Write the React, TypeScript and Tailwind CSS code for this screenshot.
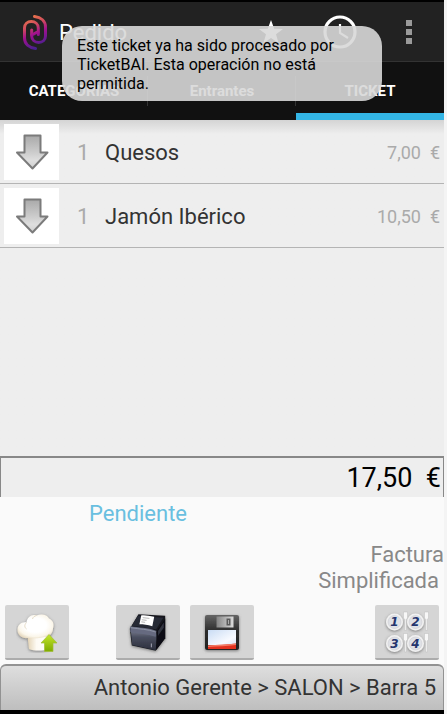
import type { ReactNode } from "react";

const lines = [
  { id: 1, units: 1, name: "Quesos", price: "7,00" },
  { id: 2, units: 1, name: "Jamón Ibérico", price: "10,50" },
];

const tabs = [
  { label: "CATEGORIAS", active: false },
  { label: "Entrantes", active: false },
  { label: "TICKET", active: true },
];

const Logo = () => (
  <svg viewBox="0 0 24 36" className="h-9 w-6" fill="none" aria-hidden="true">
    <defs>
      <linearGradient id="logo" x1="4" y1="3" x2="18" y2="34" gradientUnits="userSpaceOnUse">
        <stop offset="0" stopColor="#ec7a48" />
        <stop offset="0.3" stopColor="#cf4a5e" />
        <stop offset="0.55" stopColor="#a0108e" />
        <stop offset="1" stopColor="#3c2391" />
      </linearGradient>
    </defs>
    <g stroke="url(#logo)" strokeWidth="3" strokeLinecap="round" strokeLinejoin="round">
      <path d="M11.500 2.500c6.500.8 11 4.500 11 10.500v9c0 4-3 6.500-6.800 6.500s-7-2.500-7-6.500v-6" />
      <path d="M12.500 34.500C6 33.700 1.500 30 1.500 24v-10C1.500 10 4.500 7.500 8.300 7.500s7 2.500 7 6.500v6.500" />
      <path d="M8.700 20.500c4 0 3-2.500 6.600-2.500" />
    </g>
  </svg>
);

const StarIcon = () => (
  <svg viewBox="0 0 24 24" className="h-6 w-6" aria-hidden="true">
    <path fill="#fff" d="M12 0l3.200 8.700 8.800.2-7 5.400 2.500 8.700L12 18l-7.500 5 2.500-8.700-7-5.400 8.800-.2z" />
  </svg>
);

const ClockIcon = () => (
  <svg viewBox="0 0 34 34" className="h-[34px] w-[34px]" fill="none" stroke="#fff" aria-hidden="true">
    <circle cx="17" cy="17" r="15" strokeWidth="3.200" />
    <path d="M17 9v9l8 5" strokeWidth="2.200" />
  </svg>
);

const MoreIcon = () => (
  <svg viewBox="0 0 8 26" className="h-[26px] w-2" fill="#9a9a9a" aria-hidden="true">
    <path d="M1 1h6v6H1zM1 10h6v6H1zM1 19h6v6H1z" />
  </svg>
);

const ArrowDown = () => (
  <svg viewBox="0 0 34 36" className="h-9 w-[34px]" aria-hidden="true">
    <defs>
      <linearGradient id="arrow" x1="0" y1="0" x2="0" y2="1">
        <stop offset="0" stopColor="#a9a9a9" />
        <stop offset="0.500" stopColor="#cbcbcb" />
        <stop offset="0.750" stopColor="#dedede" />
        <stop offset="1" stopColor="#d0d0d0" />
      </linearGradient>
    </defs>
    <path
      d="M9.500 1.500h16v17h7L17.500 34.500 2 18.500h7.500z"
      fill="url(#arrow)"
      stroke="#7b7b7b"
      strokeWidth="2"
      strokeLinejoin="round"
    />
  </svg>
);

const ChefIcon = () => (
  <svg viewBox="0 0 42 42" className="h-[42px] w-[42px]" aria-hidden="true">
    <defs>
      <radialGradient id="hat" cx="0.500" cy="0.450" r="0.600">
        <stop offset="0.500" stopColor="#ffffff" />
        <stop offset="0.800" stopColor="#fbf6ea" />
        <stop offset="1" stopColor="#e6d9bf" />
      </radialGradient>
      <linearGradient id="brim" x1="0" y1="0" x2="1" y2="0">
        <stop offset="0" stopColor="#e3d3b4" />
        <stop offset="0.400" stopColor="#fdfaf3" />
        <stop offset="1" stopColor="#fff" />
      </linearGradient>
      <linearGradient id="up" x1="0" y1="0" x2="0" y2="1">
        <stop offset="0" stopColor="#c4e62c" />
        <stop offset="1" stopColor="#7fab00" />
      </linearGradient>
      <filter id="soft" x="-20%" y="-20%" width="140%" height="140%">
        <feDropShadow dx="0" dy="1" stdDeviation="1.500" floodColor="#555" floodOpacity="0.700" />
      </filter>
    </defs>
    <g filter="url(#soft)">
      <path d="M11.500 25l1.500 13c5 2 14 2 19 0l2-14z" fill="url(#brim)" />
      <path
        d="M12 27C6 28 1.500 24 1.500 19s4-8.500 9-7.500C11.500 6 15.500 3 20.500 4.500 26 2.500 31 3.500 33 7.500c4 1.500 5.500 6 4 10 0 5-3.500 8-8 8.500-6 1.500-11 1.500-17 1z"
        fill="url(#hat)"
      />
      <path d="M10.500 11.500c-2.500 2.500-2 5 0 6.500M20.500 4.500c-2 .5-3.500 1.500-4 3.500" fill="none" stroke="#e6dbc5" />
    </g>
    <path d="M33 23.500l8 8.500h-4v8.500h-8.500V32H25z" fill="url(#up)" stroke="#a1bd36" strokeWidth="0.700" />
  </svg>
);

const PrinterIcon = () => (
  <svg viewBox="0 0 46 46" className="h-11 w-11" aria-hidden="true">
    <defs>
      <linearGradient id="front" x1="0" y1="0" x2="0" y2="1">
        <stop offset="0" stopColor="#777b8c" />
        <stop offset="0.350" stopColor="#4a4e5f" />
        <stop offset="1" stopColor="#2b2e3c" />
      </linearGradient>
    </defs>
    <g filter="url(#soft)">
      <path d="M13 4.500l28 1.500v23.500L31 42.500 6 37 4 19.500z" fill="#16181f" />
      <path d="M12.500 6L39 8l-7.500 12L6 16.500z" fill="#272a35" />
      <path d="M5 21l27 3.500.5 5L31 42 6.500 36.500z" fill="url(#front)" />
      <path d="M4.500 17c9 1.500 18 1 27.500 5l-1 6c-9-3-18-3-26.500-5z" fill="#666b80" />
      <path d="M5 18.500c9 1.500 18 1.500 26 4.500" fill="none" stroke="#8f94a6" />
      <path d="M32 22l9-13v20.500L31.500 42z" fill="#0d0e13" />
      <path d="M33.500 22L39.500 13v5.500l-6 8.500z" fill="#303440" />
    </g>
    <path d="M16 5.500c5-.5 8 .5 13.500 1.500L27.500 17c-5-1.500-9-2-13.500-2z" fill="#fff" />
    <path d="M17.500 8l7 .8M16.500 10.200l5 .6M16 12.400l4 .5" stroke="#b5b5b5" />
    <path d="M26.500 35v4" stroke="#aab" />
  </svg>
);

const FloppyIcon = () => (
  <svg viewBox="0 0 46 46" className="h-[46px] w-[46px]" aria-hidden="true">
    <defs>
      <linearGradient id="case" x1="0" y1="0" x2="0" y2="1">
        <stop offset="0" stopColor="#666" />
        <stop offset="0.450" stopColor="#2c2c2c" />
        <stop offset="1" stopColor="#222" />
      </linearGradient>
      <linearGradient id="label" x1="0" y1="0" x2="1" y2="1">
        <stop offset="0" stopColor="#c9dcf4" />
        <stop offset="0.700" stopColor="#f8faff" />
        <stop offset="1" stopColor="#d9e6f8" />
      </linearGradient>
      <linearGradient id="metal" x1="0" y1="0" x2="1" y2="0">
        <stop offset="0" stopColor="#858585" />
        <stop offset="1" stopColor="#dcdcdc" />
      </linearGradient>
    </defs>
    <rect x="6" y="6" width="34" height="35" rx="2" fill="url(#case)" filter="url(#soft)" />
    <path d="M17.500 7.500h17v11h-17z" fill="url(#metal)" />
    <path d="M27.500 9.500h4v7h-4z" fill="#5a5a5a" />
    <path d="M29 11h1v4h-1z" fill="#aaa" />
    <path d="M9 21h28v15H9z" fill="url(#label)" />
    <path d="M9 36.500c10-.5 18-1 28-2V40H9z" fill="#e3311f" />
    <path d="M9 36.500c10-.5 18-1 28-2v1.500c-10 1-18 1.500-28 2z" fill="#f37c66" />
  </svg>
);

const plates = [
  { n: 1, x: 10.500, y: 13 },
  { n: 2, x: 31.500, y: 13 },
  { n: 3, x: 10.500, y: 34.500 },
  { n: 4, x: 31.500, y: 34.500 },
];

const TablesIcon = () => (
  <svg viewBox="0 0 46 46" className="h-[46px] w-[46px]" aria-hidden="true">
    {plates.map((p) => (
      <g key={p.n}>
        <circle cx={p.x} cy={p.y} r="8.500" fill="#f1f1f1" filter="url(#soft)" />
        <circle cx={p.x} cy={p.y} r="6.500" fill="#dfe1e6" stroke="#c8c8ce" strokeWidth="0.500" />
        <text
          x={p.x}
          y={p.y + 4}
          textAnchor="middle"
          className="font-['DejaVu_Sans',sans-serif] text-[12px] font-bold italic"
          fill="#24356f"
        >
          {p.n}
        </text>
      </g>
    ))}
    {plates.map((p) => (
      <path
        key={p.n}
        d={`M${p.x + 9} ${p.y - 10}v6l1.200 1.500v11h1.600v-11l1.200-1.500v-6z`}
        fill="#f7f7f7"
        stroke="#b4b4b4"
        strokeWidth="0.400"
      />
    ))}
  </svg>
);

const ToolButton = ({ label, children }: { label: string; children: ReactNode }) => (
  <button
    type="button"
    aria-label={label}
    className="flex h-[55px] w-16 items-center justify-center rounded-xs border-b-2 border-[#acacac] bg-[#d5d5d5]"
  >
    {children}
  </button>
);

const Toast = () => (
  <div
    role="status"
    className="absolute inset-x-[62px] top-[26px] rounded-[20px] bg-[#d8d8d8]/90 px-[15px] pt-[10px] pb-2 text-base leading-[19px] text-black"
  >
    Este ticket ya ha sido procesado por TicketBAI. Esta operación no está permitida.
  </div>
);

const Header = () => (
  <header className="border-t-2 border-black bg-[#222]">
    <div className="flex h-[60px] items-center border-b border-[#333] pr-[31px] pl-[23px]">
      <Logo />
      <h1 className="ml-3 flex-1 pt-0.5 text-[22px] text-white">Pedido</h1>
      <button type="button" aria-label="Favoritos" className="mr-10">
        <StarIcon />
      </button>
      <button type="button" aria-label="Historial" className="mr-12">
        <ClockIcon />
      </button>
      <button type="button" aria-label="Más opciones">
        <MoreIcon />
      </button>
    </div>
    <nav className="grid h-[58px] grid-cols-3 bg-[#111]">
      {tabs.map((tab) => (
        <button
          key={tab.label}
          type="button"
          className={
            tab.active
              ? "border-b-[7px] border-[#33b5e5] pt-[7px] text-[15px] font-bold text-white"
              : "relative text-[15px] font-bold text-white after:absolute after:top-[14px] after:right-0 after:h-[30px] after:w-px after:bg-[#333]"
          }
        >
          {tab.label}
        </button>
      ))}
    </nav>
  </header>
);

const App = () => {
  return (
    <div className="min-h-screen bg-[#f4f4f4] pr-[3px] font-[Roboto,sans-serif]">
      <div className="relative flex min-h-screen flex-col border-b-4 border-black bg-[#eee]">
        <Header />
        <Toast />

        <main className="flex flex-1 flex-col">
          <ul className="flex-1 bg-linear-to-b from-[#d4d4d4] to-[#eee] to-[14px]">
            {lines.map((line) => (
              <li key={line.id} className="flex h-16 items-center border-b border-[#b4b4b4] px-1">
                <button
                  type="button"
                  aria-label={`Bajar ${line.name}`}
                  className="flex h-14 w-[55px] items-center justify-center bg-white"
                >
                  <ArrowDown />
                </button>
                <span className="ml-[18px] w-7 pt-0.5 text-[22px] text-[#aaa]">{line.units}</span>
                <span className="flex-1 pt-0.5 text-[22px] text-[#333]">{line.name}</span>
                <span className="pt-0.5 text-lg whitespace-pre text-[#aaa]">{line.price}  €</span>
              </li>
            ))}
          </ul>

          <p className="h-[41px] border-x border-t-2 border-[#888] pr-0.5 text-right text-[27px] leading-10 whitespace-pre text-black">
            17,50  €
          </p>

          <section className="bg-[#fafafa]">
            <p className="pl-[89px] text-[22px] leading-[34px] text-[#69bfe0]">Pendiente</p>
            <p className="mt-[11px] text-right text-[22px] leading-[26px] text-[#888]">
              Factura
              <br />
              <span className="pr-[5px]">Simplificada</span>
            </p>
            <div className="flex px-[5px] pt-[11px] pb-1">
              <ToolButton label="Enviar a cocina">
                <ChefIcon />
              </ToolButton>
              <div className="ml-[47px] flex flex-1 gap-[10px]">
                <ToolButton label="Imprimir">
                  <PrinterIcon />
                </ToolButton>
                <ToolButton label="Guardar">
                  <FloppyIcon />
                </ToolButton>
              </div>
              <ToolButton label="Mesas">
                <TablesIcon />
              </ToolButton>
            </div>
          </section>
        </main>

        <footer className="bg-[#fafafa]">
          <p className="rounded-t-md border-x border-t-2 border-[#929292] bg-linear-to-b from-[#dedede] to-[#bebebe] pr-[7px] text-right text-[22px] leading-[44px] text-[#333]">
            Antonio Gerente &gt; SALON &gt; Barra 5
          </p>
        </footer>
      </div>
    </div>
  );
};

export default App;
